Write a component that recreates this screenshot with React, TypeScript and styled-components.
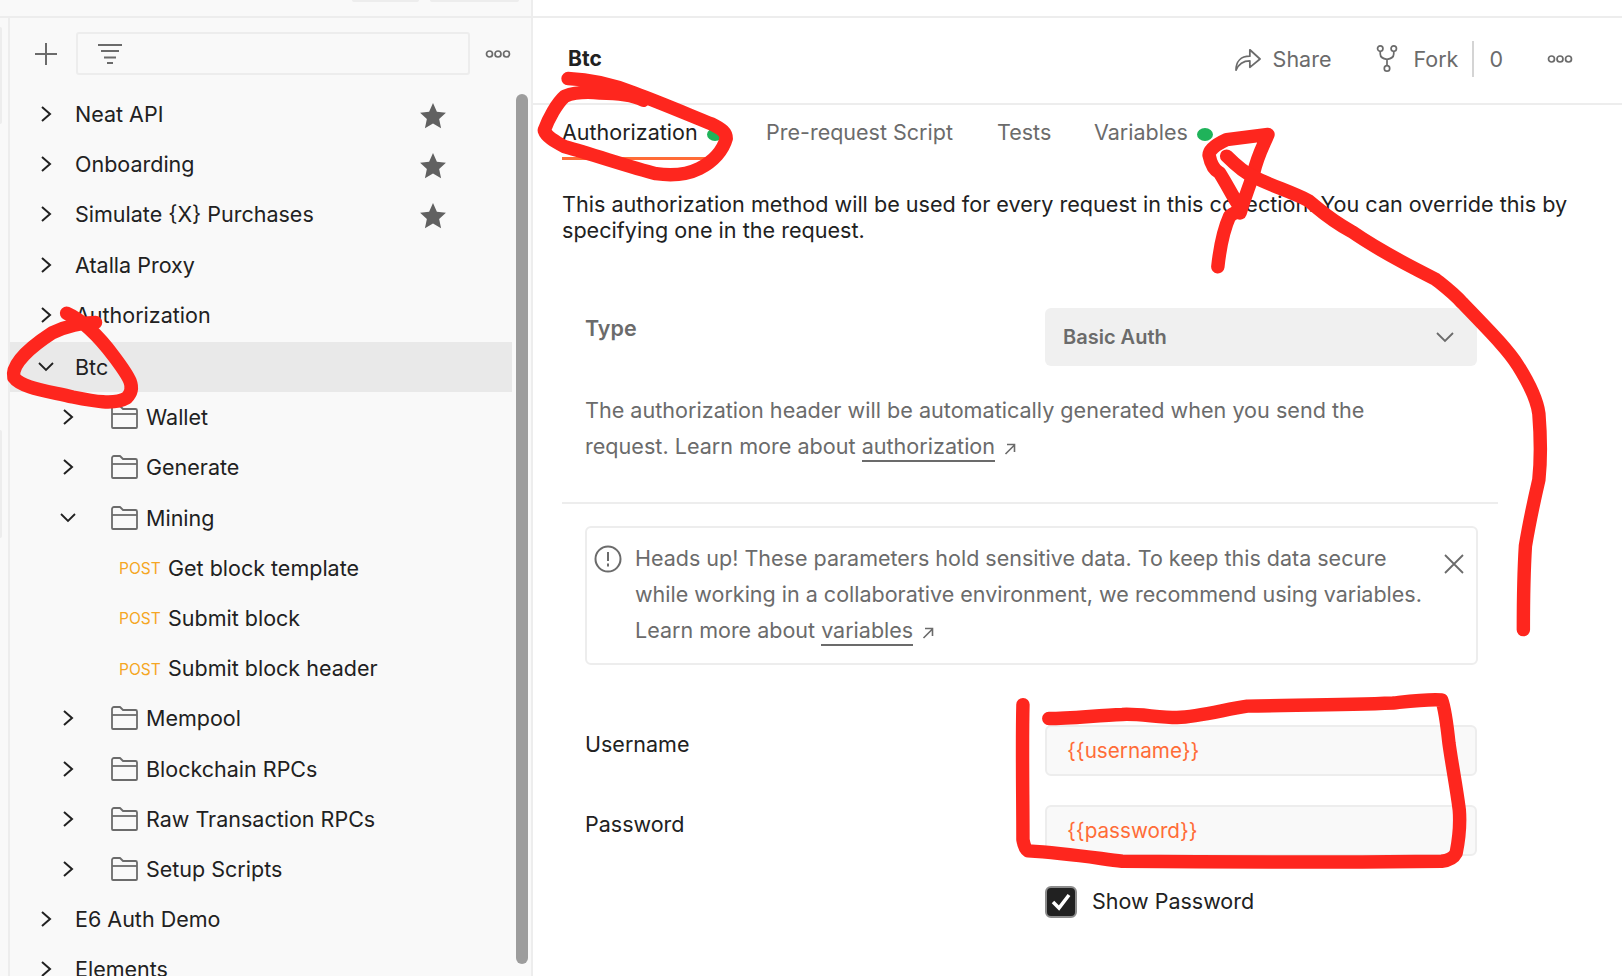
import React from "react";
import styled, { createGlobalStyle } from "styled-components";

const GlobalStyle = createGlobalStyle`
  html, body {
    margin: 0;
    padding: 0;
    background: #fff;
    overflow: hidden;
  }
  * {
    box-sizing: border-box;
  }
  body {
    font-family: Inter, "Liberation Sans", sans-serif;
    color: #212121;
  }
`;

const Page = styled.div`
  position: relative;
  width: 1622px;
  height: 976px;
  overflow: hidden;
  display: flex;
  flex-direction: column;
`;

const TopBar = styled.div`
  height: 18px;
  flex: none;
  display: flex;
  border-bottom: 2px solid #ededed;
`;
const TopLeft = styled.div`
  width: 533px;
  background: #f9f9f9;
  border-right: 2px solid #ededed;
  display: flex;
  gap: 11px;
  padding-left: 352px;
`;
const TopPill = styled.div<{ $w: number }>`
  width: ${(p) => p.$w}px;
  height: 2px;
  background: #ededed;
  border-radius: 0 0 3px 3px;
`;

const Body = styled.div`
  flex: 1;
  display: flex;
  min-height: 0;
`;

const Sidebar = styled.aside`
  position: relative;
  width: 533px;
  flex: none;
  background: #f9f9f9;
  border-right: 2px solid #ededed;
  padding-left: 10px;
  overflow: hidden;
  &::before {
    content: "";
    position: absolute;
    left: 8px;
    top: 0;
    bottom: 0;
    width: 2px;
    background: #ededed;
  }
`;
const EdgeTab = styled.div<{ $top: number; $h: number }>`
  position: absolute;
  left: 0;
  top: ${(p) => p.$top}px;
  width: 2px;
  height: ${(p) => p.$h}px;
  background: #ededed;
  border-radius: 0 3px 3px 0;
`;

const SideTools = styled.div`
  height: 43px;
  margin-top: 14px;
  display: flex;
  align-items: center;
  color: #6b6b6b;
`;
const PlusBtn = styled.div`
  width: 66px;
  flex: none;
  display: flex;
  justify-content: center;
  padding-left: 6px;
  svg {
    display: block;
  }
`;
const FilterBox = styled.div`
  width: 394px;
  height: 43px;
  border: 2px solid #ededed;
  border-radius: 3px;
  display: flex;
  align-items: center;
  padding-left: 19px;
`;
const SideMore = styled.div`
  margin-left: 15px;
  display: flex;
`;

const TreeArea = styled.div`
  display: flex;
  margin-top: 16px;
`;
const Tree = styled.div`
  width: 502px;
  flex: none;
`;
const Thumb = styled.div`
  width: 12px;
  height: 870px;
  margin-left: 4px;
  margin-top: 3px;
  border-radius: 6px;
  background: #9d9d9d;
  flex: none;
`;

const Row = styled.div<{ $active?: boolean; $lift?: boolean }>`
  height: 50.2px;
  display: flex;
  align-items: center;
  padding-bottom: ${(p) => (p.$lift ? 4 : 0)}px;
  background: ${(p) => (p.$active ? "#e9e9e9" : "transparent")};
  font-size: 21.5px;
  color: #212121;
  white-space: nowrap;
`;
const Caret = styled.span<{ $depth: number }>`
  width: 16px;
  flex: none;
  margin-left: ${(p) => (p.$depth === 0 ? 28 : 50)}px;
  display: flex;
  justify-content: center;
  color: #212121;
`;
const RowName = styled.span<{ $gap: number }>`
  margin-left: ${(p) => p.$gap}px;
  flex: 1;
`;
const FolderWrap = styled.span`
  margin-left: 35px;
  display: flex;
  color: #6b6b6b;
`;
const Method = styled.span`
  margin-left: 109px;
  width: 49px;
  flex: none;
  font-size: 15.5px;
  color: #f5a623;
  padding-top: 2px;
`;
const StarSlot = styled.span`
  width: 28px;
  margin: 4px 65px 0 0;
  display: flex;
  color: #616161;
`;

const Main = styled.main`
  flex: 1;
  min-width: 0;
  background: #fff;
`;
const MainHead = styled.header`
  height: 87px;
  padding: 0 49px 0 35px;
  display: flex;
  align-items: center;
  border-bottom: 2px solid #ededed;
`;
const Title = styled.h1`
  margin: 0 auto 4px 0;
  font-size: 21px;
  font-weight: 700;
  color: #212121;
`;
const HeadAction = styled.div<{ $gap?: number; $ml?: number }>`
  display: flex;
  align-items: center;
  gap: ${(p) => p.$gap ?? 0}px;
  margin-left: ${(p) => p.$ml ?? 0}px;
  margin-bottom: 4px;
  font-size: 21.5px;
  color: #6b6b6b;
`;
const HeadSep = styled.div`
  width: 2px;
  height: 36px;
  background: #d4d4d4;
  margin: 0 15px 4px 14px;
`;

const TabsRow = styled.nav`
  height: 55px;
  padding-left: 29px;
  display: flex;
`;
const Tab = styled.div<{ $active?: boolean; $w: number }>`
  position: relative;
  width: ${(p) => p.$w}px;
  display: flex;
  align-items: center;
  gap: 9px;
  font-size: 21.5px;
  padding-bottom: 1px;
  color: ${(p) => (p.$active ? "#212121" : "#6b6b6b")};
  white-space: nowrap;
`;
const TabLine = styled.div`
  position: absolute;
  left: 0;
  width: 159px;
  bottom: 0;
  height: 3px;
  background: #ff6c37;
`;
const GreenDot = styled.span`
  width: 16px;
  height: 13px;
  margin-top: 5px;
  border-radius: 50%;
  background: #1fb35a;
  flex: none;
`;

const Content = styled.div`
  padding: 32px 0 0 29px;
`;
const Intro = styled.p`
  margin: 0;
  width: 1012px;
  font-size: 21.6px;
  line-height: 25.5px;
  color: #212121;
`;
const AuthForm = styled.div`
  width: 936px;
  margin-top: 65px;
`;
const TypeRow = styled.div`
  display: grid;
  grid-template-columns: 460px 432px;
  padding-left: 23px;
`;
const TypeLabel = styled.div`
  font-size: 21.5px;
  font-weight: 600;
  color: #6b6b6b;
  padding-top: 7px;
`;
const SelectBox = styled.div`
  height: 58px;
  background: #f0f0f0;
  border-radius: 6px;
  display: flex;
  align-items: center;
  justify-content: space-between;
  padding: 0 23px 0 18px;
  font-size: 20px;
  font-weight: 600;
  color: #6b6b6b;
`;
const TypeNote = styled.p`
  margin: 26px 0 0;
  padding-left: 23px;
  font-size: 21.6px;
  line-height: 36px;
  color: #6b6b6b;
`;
const DocLink = styled.span`
  color: #6b6b6b;
  border-bottom: 2px solid #6b6b6b;
  padding-bottom: 1px;
`;
const ArrowOut = styled.svg`
  margin-left: 9px;
  vertical-align: -1px;
`;
const Divider = styled.div`
  height: 2px;
  background: #ededed;
  margin-top: 38px;
`;
const Alert = styled.div`
  position: relative;
  width: 893px;
  height: 139px;
  margin: 22px 0 0 23px;
  border: 2px solid #ededed;
  border-radius: 6px;
  display: flex;
  padding: 12px 0 0 7px;
  color: #6b6b6b;
`;
const AlertText = styled.p`
  margin: 0 0 0 13px;
  font-size: 21.5px;
  line-height: 36px;
  white-space: nowrap;
`;
const AlertIcon = styled.span`
  display: flex;
  height: 28px;
  margin-top: 5px;
`;
const CloseBtn = styled.span`
  position: absolute;
  right: 12px;
  top: 26px;
  display: flex;
`;
const FieldGrid = styled.div`
  display: grid;
  grid-template-columns: 460px 432px;
  row-gap: 29px;
  padding-left: 23px;
  margin-top: 60px;
`;
const FieldLabel = styled.label`
  font-size: 21.5px;
  color: #212121;
  padding-top: 6px;
`;
const VarInput = styled.div`
  height: 51px;
  background: #f9f9f9;
  border: 2px solid #ededed;
  border-radius: 6px;
  padding: 11px 0 0 20px;
  font-size: 20.7px;
  color: #ff6c37;
`;
const ShowRow = styled.div`
  grid-column: 2;
  display: flex;
  align-items: center;
  gap: 15px;
  margin-top: 1px;
  font-size: 21.5px;
  color: #212121;
`;
const ShowText = styled.span`
  margin-bottom: 3px;
`;
const CheckBox = styled.span`
  width: 32px;
  height: 32px;
  border-radius: 6px;
  background: #212121;
  border: 2px solid #8c8c8c;
  display: flex;
  align-items: center;
  justify-content: center;
`;

const Scribbles = styled.svg`
  position: absolute;
  left: 0;
  top: 0;
  width: 1622px;
  height: 976px;
  pointer-events: none;
`;

const ChevronRight = () => (
  <svg width="12" height="18" viewBox="0 0 12 18" fill="none" stroke="currentColor" strokeWidth="2">
    <path d="M2 2l8 7-8 7" />
  </svg>
);
const ChevronDown = () => (
  <svg width="16" height="10" viewBox="0 0 16 10" fill="none" stroke="currentColor" strokeWidth="1.8">
    <path d="M1 1l7 7 7-7" />
  </svg>
);
const Folder = () => (
  <svg width="27" height="24" viewBox="0 0 27 24" fill="none" stroke="currentColor" strokeWidth="1.8" strokeLinejoin="round">
    <path d="M1 22V3a2 2 0 0 1 2-2h6l3 3h12.5a1.5 1.5 0 0 1 1.5 1.5V22a1 1 0 0 1-1 1H2a1 1 0 0 1-1-1z" />
    <path d="M1 9h25" />
  </svg>
);
const Star = () => (
  <svg width="28" height="28" viewBox="0 0 26 26" fill="currentColor">
    <path d="M13 1l3.6 8 8.4.9-6.3 5.8 1.8 8.6L13 19.9l-7.5 4.4 1.8-8.6L1 9.9 9.4 9z" />
  </svg>
);
const Dots = () => (
  <svg width="26" height="10" viewBox="0 0 26 10" fill="none" stroke="currentColor" strokeWidth="1.7">
    <circle cx="4.5" cy="5" r="3" />
    <circle cx="13" cy="5" r="3" />
    <circle cx="21.5" cy="5" r="3" />
  </svg>
);
const OutArrow = () => (
  <ArrowOut width="12" height="12" viewBox="0 0 12 12" fill="none" stroke="#6b6b6b" strokeWidth="1.6">
    <path d="M1.5 11L10.5 2M3 1.5h7.5V9" />
  </ArrowOut>
);

type Item = {
  name: string;
  depth: 0 | 1;
  open?: boolean;
  star?: boolean;
  active?: boolean;
  folder?: boolean;
  post?: boolean;
  lift?: boolean;
};

const items: Item[] = [
  { name: "Neat API", depth: 0, star: true, lift: true },
  { name: "Onboarding", depth: 0, star: true, lift: true },
  { name: "Simulate {X} Purchases", depth: 0, star: true, lift: true },
  { name: "Atalla Proxy", depth: 0, lift: true },
  { name: "Authorization", depth: 0, lift: true },
  { name: "Btc", depth: 0, open: true, active: true },
  { name: "Wallet", depth: 1, folder: true },
  { name: "Generate", depth: 1, folder: true },
  { name: "Mining", depth: 1, folder: true, open: true },
  { name: "Get block template", depth: 1, post: true },
  { name: "Submit block", depth: 1, post: true },
  { name: "Submit block header", depth: 1, post: true },
  { name: "Mempool", depth: 1, folder: true },
  { name: "Blockchain RPCs", depth: 1, folder: true },
  { name: "Raw Transaction RPCs", depth: 1, folder: true },
  { name: "Setup Scripts", depth: 1, folder: true },
  { name: "E6 Auth Demo", depth: 0 },
  { name: "Elements", depth: 0 },
];

function TreeRow({ item }: { item: Item }) {
  if (item.post) {
    return (
      <Row>
        <Method>POST</Method>
        <RowName $gap={0}>{item.name}</RowName>
      </Row>
    );
  }
  return (
    <Row $active={item.active} $lift={item.lift}>
      <Caret $depth={item.depth}>{item.open ? <ChevronDown /> : <ChevronRight />}</Caret>
      {item.folder && (
        <FolderWrap>
          <Folder />
        </FolderWrap>
      )}
      <RowName $gap={item.depth === 0 ? 21 : 8}>{item.name}</RowName>
      {item.star && (
        <StarSlot>
          <Star />
        </StarSlot>
      )}
    </Row>
  );
}

export default function App() {
  return (
    <Page>
      <GlobalStyle />
      <TopBar>
        <TopLeft>
          <TopPill $w={67} />
          <TopPill $w={89} />
        </TopLeft>
      </TopBar>
      <Body>
        <Sidebar>
          <EdgeTab $top={9} $h={97} />
          <EdgeTab $top={412} $h={108} />
          <SideTools>
            <PlusBtn>
              <svg width="22" height="22" viewBox="0 0 22 22" stroke="currentColor" strokeWidth="2">
                <path d="M11 0v22M0 11h22" />
              </svg>
            </PlusBtn>
            <FilterBox>
              <svg width="26" height="22" viewBox="0 0 26 22" stroke="currentColor" strokeWidth="2">
                <path d="M1 2h24M4 8h18M7 14.5h12M10 20h6" />
              </svg>
            </FilterBox>
            <SideMore>
              <Dots />
            </SideMore>
          </SideTools>
          <TreeArea>
            <Tree>
              {items.map((item) => (
                <TreeRow key={item.name} item={item} />
              ))}
            </Tree>
            <Thumb />
          </TreeArea>
        </Sidebar>
        <Main>
          <MainHead>
            <Title>Btc</Title>
            <HeadAction $gap={12}>
              <svg width="26" height="24" viewBox="0 0 28 26" fill="none" stroke="currentColor" strokeWidth="1.9" strokeLinejoin="round">
                <path d="M1 25c0-9 5-15 15-15V3l11 10-11 9v-7C9 15 4 18 1 25z" />
              </svg>
              Share
            </HeadAction>
            <HeadAction $gap={14} $ml={44}>
              <svg width="24" height="27" viewBox="0 0 24 30" fill="none" stroke="currentColor" strokeWidth="1.9">
                <circle cx="4.5" cy="4" r="3" />
                <circle cx="19.5" cy="4" r="3" />
                <circle cx="12" cy="26" r="3" />
                <path d="M4.5 7v3c0 4 3 5 7.5 6 4.5-1 7.5-2 7.5-6V7M12 16v7" />
              </svg>
              Fork
            </HeadAction>
            <HeadSep />
            <HeadAction>0</HeadAction>
            <HeadAction $ml={44}>
              <Dots />
            </HeadAction>
          </MainHead>
          <TabsRow>
            <Tab $active $w={204}>
              Authorization
              <GreenDot />
              <TabLine />
            </Tab>
            <Tab $w={231}>Pre-request Script</Tab>
            <Tab $w={97}>Tests</Tab>
            <Tab $w={160}>
              Variables
              <GreenDot />
            </Tab>
          </TabsRow>
          <Content>
            <Intro>
              This authorization method will be used for every request in this collection. You can override this by specifying one in the request.
            </Intro>
            <AuthForm>
              <TypeRow>
                <TypeLabel>Type</TypeLabel>
                <SelectBox>
                  Basic Auth
                  <svg width="18" height="11" viewBox="0 0 18 11" fill="none" stroke="#6b6b6b" strokeWidth="1.8">
                    <path d="M1 1l8 8 8-8" />
                  </svg>
                </SelectBox>
              </TypeRow>
              <TypeNote>
                The authorization header will be automatically generated when you send the
                <br />
                request. Learn more about <DocLink>authorization</DocLink>
                <OutArrow />
              </TypeNote>
              <Divider />
              <Alert>
                <AlertIcon>
                  <svg width="28" height="28" viewBox="0 0 28 28" fill="none" stroke="#6b6b6b" strokeWidth="2">
                    <circle cx="14" cy="14" r="12.5" />
                    <path d="M14 7v9M14 18.5v3" />
                  </svg>
                </AlertIcon>
                <AlertText>
                  Heads up! These parameters hold sensitive data. To keep this data secure
                  <br />
                  while working in a collaborative environment, we recommend using variables.
                  <br />
                  Learn more about <DocLink>variables</DocLink>
                  <OutArrow />
                </AlertText>
                <CloseBtn>
                  <svg width="20" height="20" viewBox="0 0 20 20" stroke="#6b6b6b" strokeWidth="1.8">
                    <path d="M1 1l18 18M19 1L1 19" />
                  </svg>
                </CloseBtn>
              </Alert>
              <FieldGrid>
                <FieldLabel>Username</FieldLabel>
                <VarInput>{"{{username}}"}</VarInput>
                <FieldLabel>Password</FieldLabel>
                <VarInput>{"{{password}}"}</VarInput>
                <ShowRow>
                  <CheckBox>
                    <svg width="20" height="18" viewBox="0 0 20 18" fill="none" stroke="#fff" strokeWidth="3.5">
                      <path d="M2 9l6 6L18 2" />
                    </svg>
                  </CheckBox>
                  <ShowText>Show Password</ShowText>
                </ShowRow>
              </FieldGrid>
            </AuthForm>
          </Content>
        </Main>
      </Body>
      <Scribbles viewBox="0 0 1568 944" fill="none" stroke="#fe261e" strokeWidth="13" strokeLinecap="round" strokeLinejoin="round">
        <path d="M64 303C80 310 95 325 110 345C125 365 132 375 122 385C110 392 90 388 70 384C45 378 20 375 13 365C10 352 30 335 50 322C65 315 80 312 92 312" />
        <path d="M549 76C575 77 595 83 613 90C640 100 668 112 688 120C698 125 702 128 702 134C699 145 690 156 676 163C662 170 648 170 634 168C610 162 575 150 546 142C535 136 528 132 526 126C530 115 538 100 546 93C556 89 570 89 580 90C595 90 612 92 622 97" />
        <path d="M1177.5 258C1180 235 1184 220 1189 209C1195 205 1198 203 1199 206C1204 190 1208 180 1212 167.5C1216 150 1222 140 1226 130C1210 132 1195 134 1186 135C1175 140 1169 145 1169 150C1171 160 1175 165 1179 167C1186 178 1192 190 1196 196" />
        <path d="M1186 151C1195 160 1205 168 1212 171C1230 180 1250 186 1265 194C1275 202 1285 212 1307 224C1330 240 1360 256 1388 270C1398 278 1406 284 1414 293C1440 320 1458 338 1468 354C1478 370 1486 385 1488 400C1490 425 1490 445 1488 464C1482 490 1478 510 1475 528C1473 560 1473 585 1473 609" />
        <path d="M989 681.5C988 720 989 770 989 812C990 818 991 821 994 823C1030 825 1060 830 1085 833C1180 834 1300 834 1394 833C1402 832 1406 829 1408 825C1411 810 1412 795 1411 783C1408 760 1404 740 1401 718.5C1399 700 1397 685 1394 677C1380 676 1365 678 1347 680C1300 682 1250 682 1206 683C1185 686 1160 693 1138 694C1120 694 1100 690 1085 691C1060 692 1035 695 1014 695" />
      </Scribbles>
    </Page>
  );
}
